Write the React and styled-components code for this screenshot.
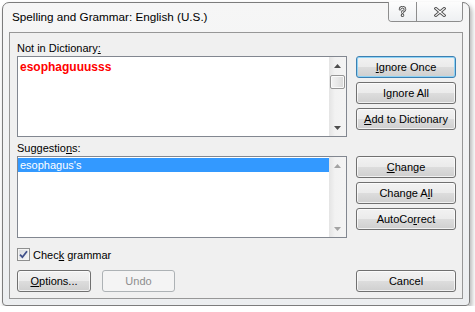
import React from "react";
import styled, { createGlobalStyle } from "styled-components";

const GlobalStyle = createGlobalStyle`
  html, body {
    margin: 0;
    padding: 0;
    background: #ffffff;
  }
  body {
    font-family: "Liberation Sans", Arial, sans-serif;
    font-size: 11px;
    color: #000;
  }
`;

const Window = styled.div`
  box-sizing: border-box;
  margin: 2px 0 0 2px;
  width: 468px;
  height: 304px;
  border: 1px solid #7c7c7c;
  border-radius: 7px 7px 4px 4px;
  background: linear-gradient(to bottom, #f6f6f6, #eceef0);
  box-shadow: 2px 3px 5px rgba(0, 0, 0, 0.3);
  padding: 0 6px 6px;
  display: flex;
  flex-direction: column;
`;

const TitleBar = styled.div`
  height: 29px;
  flex-shrink: 0;
  display: flex;
  align-items: flex-start;
`;

const Title = styled.div`
  flex: 1;
  margin: 7px 0 0 3px;
  font-size: 11.7px;
  white-space: nowrap;
`;

const CaptionGroup = styled.div`
  display: flex;
  margin-top: -1px;
  height: 20px;
  box-sizing: border-box;
  border: 1px solid #8d8d8d;
  border-top: none;
  border-radius: 0 0 4px 4px;
  overflow: hidden;
`;

const CaptionButton = styled.div`
  width: ${(p) => p.$w}px;
  display: flex;
  align-items: center;
  justify-content: center;
  background: linear-gradient(to bottom, #fdfdfd, #eef0f2);

  & + & {
    border-left: 1px solid #8d8d8d;
  }
`;

const Client = styled.div`
  flex: 1;
  box-sizing: border-box;
  border: 1px solid #979797;
  background: #f0f0f0;
  padding: 8px 6px 0 7px;
  display: flex;
  flex-direction: column;
`;

const Section = styled.div`
  display: grid;
  grid-template-columns: 330px 100px;
  grid-template-rows: 15px auto;
  column-gap: 9px;
  margin-top: ${(p) => p.$top || 0}px;
`;

const FieldLabel = styled.div`
  grid-column: 1;
  line-height: 15px;
  height: 15px;
`;

const U = styled.span`
  text-decoration: underline;
`;

const Box = styled.div`
  grid-column: 1;
  grid-row: 2;
  height: ${(p) => p.$h}px;
  box-sizing: border-box;
  border: 1px solid #828790;
  background: #fff;
  display: flex;
`;

const BoxContent = styled.div`
  flex: 1;
  padding-top: ${(p) => p.$pt || 0}px;
`;

const Misspelled = styled.div`
  padding-left: 2px;
  font-weight: bold;
  font-size: 12px;
  color: #ff0000;
`;

const SuggestionRow = styled.div`
  height: 14px;
  line-height: 14px;
  padding-left: 2px;
  background: ${(p) => (p.$selected ? "#3399ff" : "transparent")};
  color: ${(p) => (p.$selected ? "#fff" : "#000")};
`;

const ScrollBar = styled.div`
  width: 17px;
  display: flex;
  flex-direction: column;
  background: linear-gradient(to right, #e4e4e4, #f2f2f2 35%, #f4f4f4);
`;

const ScrollArrow = styled.div`
  height: 17px;
  display: flex;
  align-items: center;
  justify-content: center;
`;

const ScrollTrack = styled.div`
  flex: 1;
`;

const Thumb = styled.div`
  margin: 1px 1px 0 1px;
  height: 14px;
  box-sizing: border-box;
  border: 1px solid #979797;
  border-radius: 2px;
  background: linear-gradient(to right, #f3f3f3, #e8e8e8 50%, #d8d8d8);
  box-shadow: inset 0 0 0 1px #fafafa;
`;

const ButtonStack = styled.div`
  grid-column: 2;
  grid-row: 2;
  display: flex;
  flex-direction: column;
  gap: 4px;
`;

const Button = styled.div`
  box-sizing: border-box;
  width: ${(p) => p.$w || 100}px;
  height: 22px;
  display: flex;
  align-items: center;
  justify-content: center;
  border-radius: 3px;
  border: 1px solid ${(p) => (p.$default ? "#3c7fb1" : p.$disabled ? "#adb2b5" : "#707070")};
  background: ${(p) =>
    p.$disabled
      ? "#f4f4f4"
      : "linear-gradient(to bottom, #f2f2f2 0%, #ebebeb 49%, #dddddd 50%, #cfcfcf 100%)"};
  box-shadow: ${(p) =>
    p.$default
      ? "inset 0 0 0 1px #8fd3f5"
      : p.$disabled
      ? "none"
      : "inset 0 0 0 1px rgba(255,255,255,0.7)"};
  color: ${(p) => (p.$disabled ? "#8d8d8d" : "#000")};
  white-space: nowrap;
`;

const CheckRow = styled.div`
  margin-top: 10px;
  height: 13px;
  display: flex;
  align-items: center;
  gap: 3px;
`;

const CheckBox = styled.div`
  width: 13px;
  height: 13px;
  box-sizing: border-box;
  border: 1px solid #8e8f8f;
  background: linear-gradient(135deg, #d6d9dd, #f7f8f9);
  box-shadow: inset 0 0 0 1px #f4f4f4;
  display: flex;
  align-items: center;
  justify-content: center;
`;

const BottomRow = styled.div`
  margin-top: 9px;
  display: flex;
  gap: 11px;
`;

const Spacer = styled.div`
  flex: 1;
`;

const Arrow = ({ up, disabled }) => (
  <svg width="7" height="4" viewBox="0 0 7 4">
    <polygon
      points={up ? "3.5,0 7,4 0,4" : "0,0 7,0 3.5,4"}
      fill={disabled ? "#a3a3a3" : "#4d4d4d"}
    />
  </svg>
);

const HelpGlyph = () => (
  <svg width="9" height="11" viewBox="0 0 9 11">
    <g fill="none" strokeLinecap="round">
      <path d="M2 3.2 Q2 1.2 4.5 1.2 Q7 1.2 7 3.2 Q7 4.6 4.5 5.6 L4.5 6.6" stroke="#555" strokeWidth="2.6" />
      <circle cx="4.5" cy="9.2" r="0.6" stroke="#555" strokeWidth="2.4" />
      <path d="M2 3.2 Q2 1.2 4.5 1.2 Q7 1.2 7 3.2 Q7 4.6 4.5 5.6 L4.5 6.6" stroke="#fff" strokeWidth="0.9" />
      <circle cx="4.5" cy="9.2" r="0.3" stroke="#fff" strokeWidth="0.8" />
    </g>
  </svg>
);

const CloseGlyph = () => (
  <svg width="12" height="10" viewBox="0 0 12 10">
    <g fill="none" strokeLinecap="square">
      <path d="M1.8 1.5 L10.2 8.5 M10.2 1.5 L1.8 8.5" stroke="#555" strokeWidth="3" />
      <path d="M1.8 1.5 L10.2 8.5 M10.2 1.5 L1.8 8.5" stroke="#fff" strokeWidth="1.1" />
    </g>
  </svg>
);

const CheckMark = () => (
  <svg width="9" height="9" viewBox="0 0 9 9">
    <path d="M1 4.6 L3.4 7.2 L8 1.2" fill="none" stroke="#3f4f8a" strokeWidth="1.8" />
  </svg>
);

const VScroll = ({ disabled }) => (
  <ScrollBar>
    <ScrollArrow>
      <Arrow up disabled={disabled} />
    </ScrollArrow>
    <ScrollTrack>{!disabled && <Thumb />}</ScrollTrack>
    <ScrollArrow>
      <Arrow disabled={disabled} />
    </ScrollArrow>
  </ScrollBar>
);

export default function App() {
  return (
    <>
      <GlobalStyle />
      <Window>
        <TitleBar>
          <Title>Spelling and Grammar: English (U.S.)</Title>
          <CaptionGroup>
            <CaptionButton $w={27}>
              <HelpGlyph />
            </CaptionButton>
            <CaptionButton $w={45}>
              <CloseGlyph />
            </CaptionButton>
          </CaptionGroup>
        </TitleBar>
        <Client>
          <Section>
            <FieldLabel>
              Not in Dictionary<U>:</U>
            </FieldLabel>
            <Box $h={81}>
              <BoxContent $pt={3}>
                <Misspelled>esophaguuusss</Misspelled>
              </BoxContent>
              <VScroll />
            </Box>
            <ButtonStack>
              <Button $default>
                <span>
                  <U>I</U>gnore Once
                </span>
              </Button>
              <Button>
                <span>
                  I<U>g</U>nore All
                </span>
              </Button>
              <Button>
                <span>
                  <U>A</U>dd to Dictionary
                </span>
              </Button>
            </ButtonStack>
          </Section>
          <Section $top={4}>
            <FieldLabel>
              Suggestio<U>n</U>s:
            </FieldLabel>
            <Box $h={82}>
              <BoxContent $pt={1}>
                <SuggestionRow $selected>esophagus's</SuggestionRow>
              </BoxContent>
              <VScroll disabled />
            </Box>
            <ButtonStack>
              <Button>
                <span>
                  <U>C</U>hange
                </span>
              </Button>
              <Button>
                <span>
                  Change A<U>l</U>l
                </span>
              </Button>
              <Button>
                <span>
                  AutoCo<U>r</U>rect
                </span>
              </Button>
            </ButtonStack>
          </Section>
          <CheckRow>
            <CheckBox>
              <CheckMark />
            </CheckBox>
            <span>
              Chec<U>k</U> grammar
            </span>
          </CheckRow>
          <BottomRow>
            <Button $w={74}>
              <span>
                <U>O</U>ptions...
              </span>
            </Button>
            <Button $w={73} $disabled>
              Undo
            </Button>
            <Spacer />
            <Button $w={100}>Cancel</Button>
          </BottomRow>
        </Client>
      </Window>
    </>
  );
}
